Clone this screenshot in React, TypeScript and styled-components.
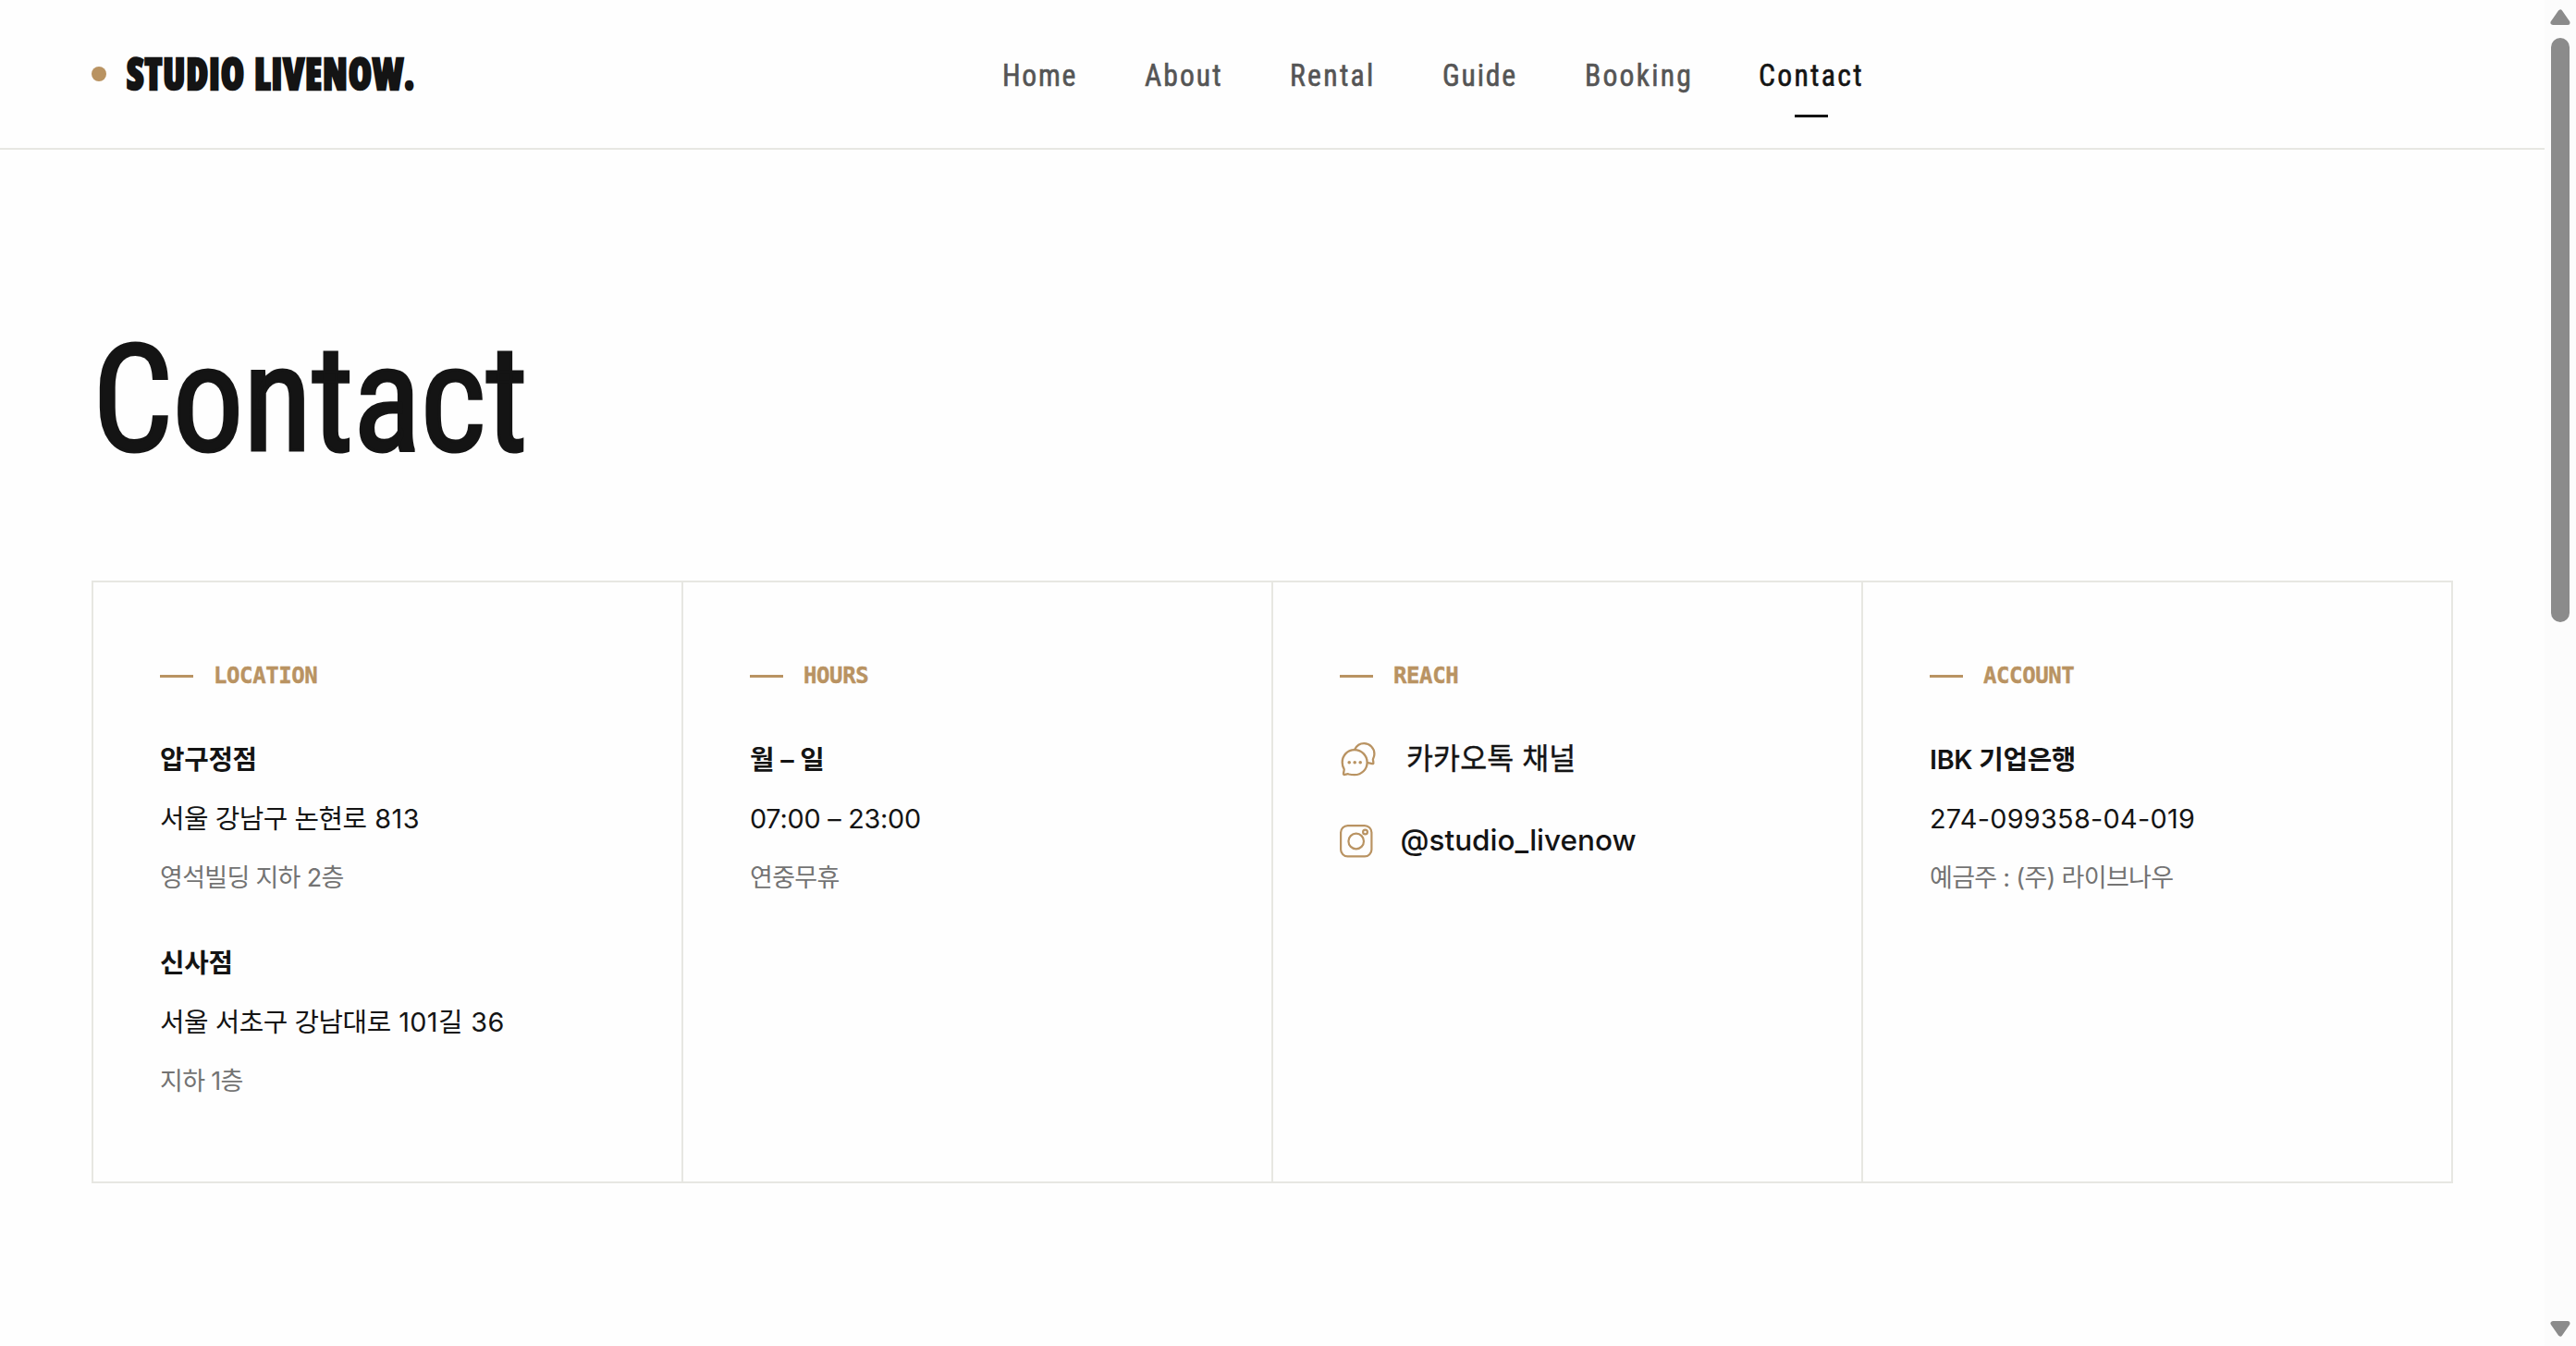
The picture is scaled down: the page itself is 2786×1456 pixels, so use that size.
import React from "react";
import styled, { createGlobalStyle } from "styled-components";

const ink = "#141414";
const gold = "#b99362";
const line = "#e7e7e2";

const GlobalStyle = createGlobalStyle`
  *, *::before, *::after { box-sizing: border-box; }
  body {
    margin: 0;
    background: #fefefe;
    color: ${ink};
    font-family: Inter, "Noto Sans CJK KR", sans-serif;
  }
  p, h1, h2, ul { margin: 0; padding: 0; }
  a { color: inherit; text-decoration: none; }
`;

const Shell = styled.div`
  display: grid;
  grid-template-columns: minmax(0, 1fr) 34px;
  height: 1456px;
  overflow: hidden;
`;

const Page = styled.div`
  display: flex;
  flex-direction: column;
`;

const Header = styled.header`
  display: flex;
  align-items: center;
  height: 162px;
  padding-left: 99px;
  border-bottom: 2px solid ${line};
`;

const Brand = styled.a`
  display: flex;
  align-items: center;
  gap: 22px;
  flex: none;
  width: 985px;
`;

const Dot = styled.span`
  width: 16px;
  height: 16px;
  border-radius: 50%;
  background: ${gold};
`;

const BrandName = styled.span`
  padding-bottom: 3px;
  font: 800 47.5px/60px "Open Sans", sans-serif;
  font-stretch: 75%;
  letter-spacing: 1.1px;
  word-spacing: 2px;
  white-space: nowrap;
  transform: scaleX(0.86);
  transform-origin: left center;
  -webkit-text-stroke: 2.4px ${ink};
`;

const Nav = styled.nav`
  display: flex;
  gap: 72px;
  padding-top: 3px;
`;

const NavLink = styled.a<{ $width: number; $active?: boolean }>`
  position: relative;
  width: ${(p) => p.$width}px;
  color: ${(p) => (p.$active ? ink : "#555555")};
  &::after {
    content: "";
    display: ${(p) => (p.$active ? "block" : "none")};
    position: absolute;
    top: 62px;
    left: 50%;
    width: 36px;
    height: 3px;
    margin-left: -18px;
    background: ${ink};
  }
`;

const NavText = styled.span<{ $tracking: number }>`
  display: block;
  font: 400 33px/39px Roboto, sans-serif;
  font-stretch: 75%;
  letter-spacing: ${(p) => p.$tracking}px;
  white-space: nowrap;
  transform: scaleX(0.96);
  transform-origin: left center;
  -webkit-text-stroke: 0.6px currentColor;
`;

const Main = styled.main`
  padding: 188px 99px 0;
`;

const Title = styled.h1`
  width: max-content;
  margin-left: 1px;
  font: 400 161px/165px Roboto, sans-serif;
  font-stretch: 75%;
  letter-spacing: -0.5px;
  transform: scaleX(0.953);
  transform-origin: left center;
  -webkit-text-stroke: 3.2px ${ink};
`;

const Cards = styled.section`
  display: grid;
  grid-template-columns: repeat(4, 638px);
  width: 2554px;
  height: 652px;
  margin-top: 113px;
  border: solid ${line};
  border-width: 2px 2px 2px 0;
`;

const Card = styled.article`
  padding: 82px 72px 0;
  border-left: 2px solid ${line};
`;

const CardLabel = styled.h2`
  display: flex;
  align-items: center;
  gap: 22px;
  height: 39px;
  margin-bottom: 46px;
  color: ${gold};
  font: 700 24px/39px "DejaVu Sans Mono", monospace;
  letter-spacing: -0.4px;
  -webkit-text-stroke: 0.4px ${gold};
  &::before {
    content: "";
    width: 36px;
    height: 3px;
    background: ${gold};
  }
`;

const Group = styled.div`
  & + & { margin-top: 44px; }
`;

const Name = styled.p`
  font-size: 28.8px;
  font-weight: 600;
  line-height: 49px;
  letter-spacing: -0.3px;
`;

const Detail = styled.p<{ $tracking: number }>`
  margin-top: 15px;
  font-size: 28.8px;
  line-height: 49px;
  letter-spacing: ${(p) => p.$tracking}px;
`;

const Hangul = styled.span`
  letter-spacing: -0.45px;
`;

const Note = styled.p`
  margin-top: 17px;
  color: #737373;
  font-size: 27px;
  line-height: 46px;
  letter-spacing: -0.7px;
`;

const Links = styled.div`
  display: flex;
  flex-direction: column;
  gap: 39px;
`;

const ReachLink = styled.a<{ $gap: number }>`
  display: flex;
  align-items: center;
  gap: ${(p) => p.$gap}px;
  height: 49px;
  font-size: 31.5px;
  font-weight: 500;
  line-height: 48px;
`;

const KoreanText = styled.span`
  padding-bottom: 2px;
  font-weight: 400;
  letter-spacing: 0.1px;
  -webkit-text-stroke: 0.4px ${ink};
`;

const HandleText = styled.span`
  padding-bottom: 2px;
`;

const ScrollTrack = styled.div`
  display: flex;
  flex-direction: column;
  align-items: center;
  padding: 10px 0;
  background: #fcfcfc;
`;

const ScrollThumb = styled.div`
  width: 20px;
  height: 632px;
  margin: 14px 0 auto;
  border-radius: 10px;
  background: #8b8b8b;
`;

const Arrow = ({ down }: { down?: boolean }) => (
  <svg width="22" height="17" viewBox="0 0 22 17" fill="#8b8b8b" stroke="#8b8b8b" strokeWidth="5" strokeLinejoin="round">
    <path d={down ? "M3 2.5H19L11 14Z" : "M3 14.5H19L11 3Z"} />
  </svg>
);

const ChatIcon = () => (
  <svg width="40" height="40" viewBox="0 0 40 40" fill="none" stroke={gold} strokeWidth="2.3" strokeLinejoin="round" strokeLinecap="round">
    <path d="M15.900 36.200c7.700 0 13.700-6 13.700-13.500S23.600 9.200 15.900 9.200 2.700 15.200 2.700 22.700c0 2.500.7 4.900 1.800 6.900.4.800.3 1.500 0 2.300l-.5 2.500c-.3 1.200.4 1.800 1.500 1.500l2.400-.6c.8-.2 1.300-.1 2 .2 1.800.5 3.800.7 6 .7Z" />
    <path d="M16.300 8.600C18.200 4.700 22 2.200 26.200 2.200c6.300 0 11.200 5 11.200 11.300 0 2.100-.5 3.700-1.300 5.200-.3.600-.3 1.100-.1 1.800l.4 2.300c.2 1-.3 1.500-1.300 1.300l-4.600-.9" />
    <g fill={gold} stroke="none">
      <circle cx="10.200" cy="22.800" r="1.800" />
      <circle cx="16.200" cy="22.800" r="1.800" />
      <circle cx="22.200" cy="22.800" r="1.800" />
    </g>
  </svg>
);

const InstagramIcon = () => (
  <svg width="36" height="36" viewBox="0 0 36 36" fill="none" stroke={gold} strokeWidth="2.200">
    <rect x="1.100" y="1.100" width="33.300" height="33.300" rx="7.500" />
    <circle cx="17.700" cy="18" r="8.300" />
    <circle cx="27.500" cy="8" r="2.400" />
  </svg>
);

const links = [
  { label: "Home", width: 81.5, tracking: 1.8 },
  { label: "About", width: 85, tracking: 2.1 },
  { label: "Rental", width: 93, tracking: 2.4 },
  { label: "Guide", width: 82, tracking: 1.9 },
  { label: "Booking", width: 116, tracking: 2.3 },
  { label: "Contact", width: 115.5, tracking: 2.4, active: true },
];

export default function App() {
  return (
    <>
      <GlobalStyle />
      <Shell>
        <Page>
          <Header>
            <Brand href="#">
              <Dot />
              <BrandName>STUDIO LIVENOW.</BrandName>
            </Brand>
            <Nav>
              {links.map((l) => (
                <NavLink key={l.label} href="#" $width={l.width} $active={l.active}>
                  <NavText $tracking={l.tracking}>{l.label}</NavText>
                </NavLink>
              ))}
            </Nav>
          </Header>
          <Main>
            <Title>Contact</Title>
            <Cards>
              <Card>
                <CardLabel>LOCATION</CardLabel>
                <Group>
                  <Name>압구정점</Name>
                  <Detail $tracking={0.5}><Hangul>서울 강남구 논현로</Hangul> 813</Detail>
                  <Note>영석빌딩 지하 2층</Note>
                </Group>
                <Group>
                  <Name>신사점</Name>
                  <Detail $tracking={0.4}><Hangul>서울 서초구 강남대로</Hangul> 101길 36</Detail>
                  <Note>지하 1층</Note>
                </Group>
              </Card>
              <Card>
                <CardLabel>HOURS</CardLabel>
                <Group>
                  <Name>월 – 일</Name>
                  <Detail $tracking={-0.25}>07:00 – 23:00</Detail>
                  <Note>연중무휴</Note>
                </Group>
              </Card>
              <Card>
                <CardLabel>REACH</CardLabel>
                <Links>
                  <ReachLink href="#" $gap={32}>
                    <ChatIcon />
                    <KoreanText>카카오톡 채널</KoreanText>
                  </ReachLink>
                  <ReachLink href="#" $gap={29.5}>
                    <InstagramIcon />
                    <HandleText>@studio_livenow</HandleText>
                  </ReachLink>
                </Links>
              </Card>
              <Card>
                <CardLabel>ACCOUNT</CardLabel>
                <Group>
                  <Name>IBK 기업은행</Name>
                  <Detail $tracking={0.3}>274-099358-04-019</Detail>
                  <Note>예금주 : (주) 라이브나우</Note>
                </Group>
              </Card>
            </Cards>
          </Main>
        </Page>
        <ScrollTrack>
          <Arrow />
          <ScrollThumb />
          <Arrow down />
        </ScrollTrack>
      </Shell>
    </>
  );
}
